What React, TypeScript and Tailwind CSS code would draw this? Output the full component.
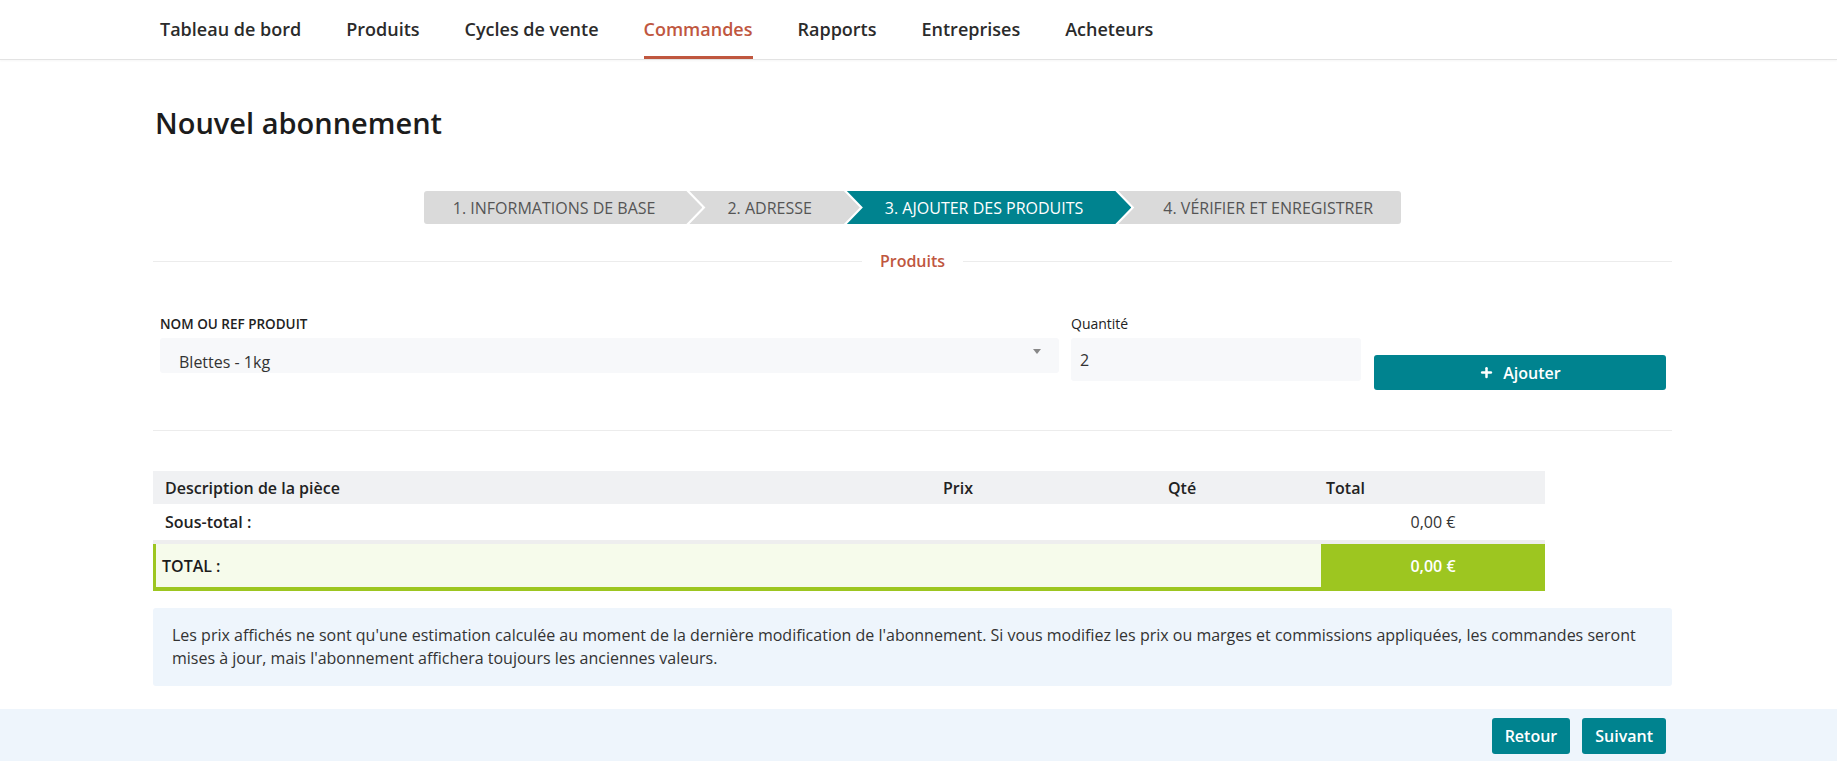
import { Plus } from 'lucide-react';

const NAV = ['Tableau de bord', 'Produits', 'Cycles de vente', 'Commandes', 'Rapports', 'Entreprises', 'Acheteurs'];

const STEPS = [
  { label: '1. INFORMATIONS DE BASE', pos: 'first' },
  { label: '2. ADRESSE', pos: 'mid' },
  { label: '3. AJOUTER DES PRODUITS', pos: 'mid', active: true },
  { label: '4. VÉRIFIER ET ENREGISTRER', pos: 'last' },
];

const Stepper = () => (
  <div className="flex justify-center">
    {STEPS.map((s, i) => {
      let shape = '';
      if (s.pos === 'first') {
        shape =
          'rounded-l-[3px] pl-[29px] pr-[47px] [clip-path:polygon(0_0,calc(100%_-_16px)_0,100%_50%,calc(100%_-_16px)_100%,0_100%)]';
      } else if (s.pos === 'mid') {
        shape =
          '-ml-[13px] pl-[38px] pr-[48px] [clip-path:polygon(0_0,calc(100%_-_16px)_0,100%_50%,calc(100%_-_16px)_100%,0_100%,16px_50%)]';
      } else {
        shape =
          '-ml-[13px] rounded-r-[3px] pl-[45px] pr-[28px] [clip-path:polygon(0_0,100%_0,100%_100%,0_100%,16px_50%)]';
      }
      return (
        <div
          key={i}
          className={`flex h-[33px] items-center text-[16px] whitespace-nowrap ${shape} ${
            s.active ? 'bg-[#00838f] text-white' : 'bg-[#dadada] text-[#555]'
          }`}
        >
          {s.label}
        </div>
      );
    })}
  </div>
);

export default function App() {
  return (
    <div className="min-h-screen bg-white text-[#333] font-['Open_Sans',sans-serif]">
      {/* Top nav */}
      <nav className="h-[60px] border-b border-[#e3e3e3] shadow-[0_1px_2px_rgba(0,0,0,0.04)]">
        <ul className="flex h-full gap-[45px] pl-[160px]">
          {NAV.map((item) => {
            const active = item === 'Commandes';
            return (
              <li
                key={item}
                className={`flex h-full items-center border-b-[3px] pt-[3px] text-[18px] font-semibold ${
                  active ? 'border-[#c0573f] text-[#c0573f]' : 'border-transparent text-[#2b2b2b]'
                }`}
              >
                {item}
              </li>
            );
          })}
        </ul>
      </nav>

      <main className="ml-[153px] w-[1519px]">
        <h1 className="mt-[44px] pl-[2px] text-[29px] leading-[38px] font-semibold text-[#1c1c1c]">
          Nouvel abonnement
        </h1>

        <div className="mt-[49px]">
          <Stepper />
        </div>

        {/* Section title */}
        <div className="mt-[27px] flex h-[20px] items-center">
          <div className="h-px flex-1 bg-[#ececec]" />
          <span className="px-[18px] text-[16px] font-semibold text-[#c0573f]">Produits</span>
          <div className="h-px flex-1 bg-[#ececec]" />
        </div>

        {/* Product form */}
        <div className="mt-[45px] flex items-start">
          <div className="ml-[7px] w-[899px]">
            <label className="block text-[13.5px] leading-[16px] font-semibold text-[#222]">NOM OU REF PRODUIT</label>
            <div className="relative mt-[6px] h-[35px] rounded-[3px] bg-[#f7f8fa]">
              <span className="absolute left-[19px] top-[14px] text-[16px] leading-[20px] text-[#333]">Blettes - 1kg</span>
              <span className="absolute right-[18px] top-[11px] h-0 w-0 border-x-[4px] border-t-[5px] border-x-transparent border-t-[#888]" />
            </div>
          </div>
          <div className="ml-[12px] w-[290px]">
            <label className="block text-[14px] leading-[16px] text-[#222]">Quantité</label>
            <div className="mt-[6px] flex h-[43px] items-center rounded-[3px] bg-[#f7f8fa] pl-[9px] text-[16px] text-[#333]">
              2
            </div>
          </div>
          <button className="ml-[13px] mt-[39px] flex h-[35px] w-[292px] items-center justify-center gap-[9px] rounded-[3px] bg-[#00838f] text-[16px] font-semibold text-white">
            <Plus className="h-[15px] w-[15px]" strokeWidth={4} />
            Ajouter
          </button>
        </div>

        <div className="mt-[40px] h-px bg-[#ececec]" />

        {/* Table */}
        <div className="mt-[40px] w-[1392px] text-[16px]">
          <div className="grid h-[33px] grid-cols-[782px_225px_161px_224px] items-center bg-[#f0f1f3] font-semibold text-[#222]">
            <div className="pl-3">Description de la pièce</div>
            <div className="pl-2">Prix</div>
            <div className="pl-2">Qté</div>
            <div className="pl-[5px]">Total</div>
          </div>
          <div className="grid h-[40px] grid-cols-[1168px_224px] items-center border-b-[4px] border-[#eeeeee] bg-white">
            <div className="pl-3 font-semibold text-[#222]">Sous-total :</div>
            <div className="text-center text-[#333]">0,00 €</div>
          </div>
          <div className="grid h-[47px] grid-cols-[1165px_224px] border-b-[4px] border-l-[3px] border-[#9dc620] bg-[#f6fbeb]">
            <div className="flex items-center pl-[6px] font-semibold text-[#1c1c1c]">TOTAL :</div>
            <div className="flex items-center justify-center bg-[#9dc620] font-semibold text-white">0,00 €</div>
          </div>
        </div>

        {/* Info */}
        <div className="mt-[17px] rounded-[3px] bg-[#eef5fc] px-[19px] py-[16px] text-[16px] leading-[23px] text-[#333]">
          Les prix affichés ne sont qu'une estimation calculée au moment de la dernière modification de l'abonnement. Si
          vous modifiez les prix ou marges et commissions appliquées, les commandes seront mises à jour, mais l'abonnement
          affichera toujours les anciennes valeurs.
        </div>
      </main>

      {/* Footer actions */}
      <footer className="mt-[23px] flex h-[52px] items-start justify-end gap-[12px] bg-[#eef5fc] pr-[171px] pt-[9px]">
        <button className="h-[36px] rounded-[3px] bg-[#00838f] px-[13px] text-[16px] font-semibold text-white">Retour</button>
        <button className="h-[36px] rounded-[3px] bg-[#00838f] px-[13px] text-[16px] font-semibold text-white">Suivant</button>
      </footer>
    </div>
  );
}
